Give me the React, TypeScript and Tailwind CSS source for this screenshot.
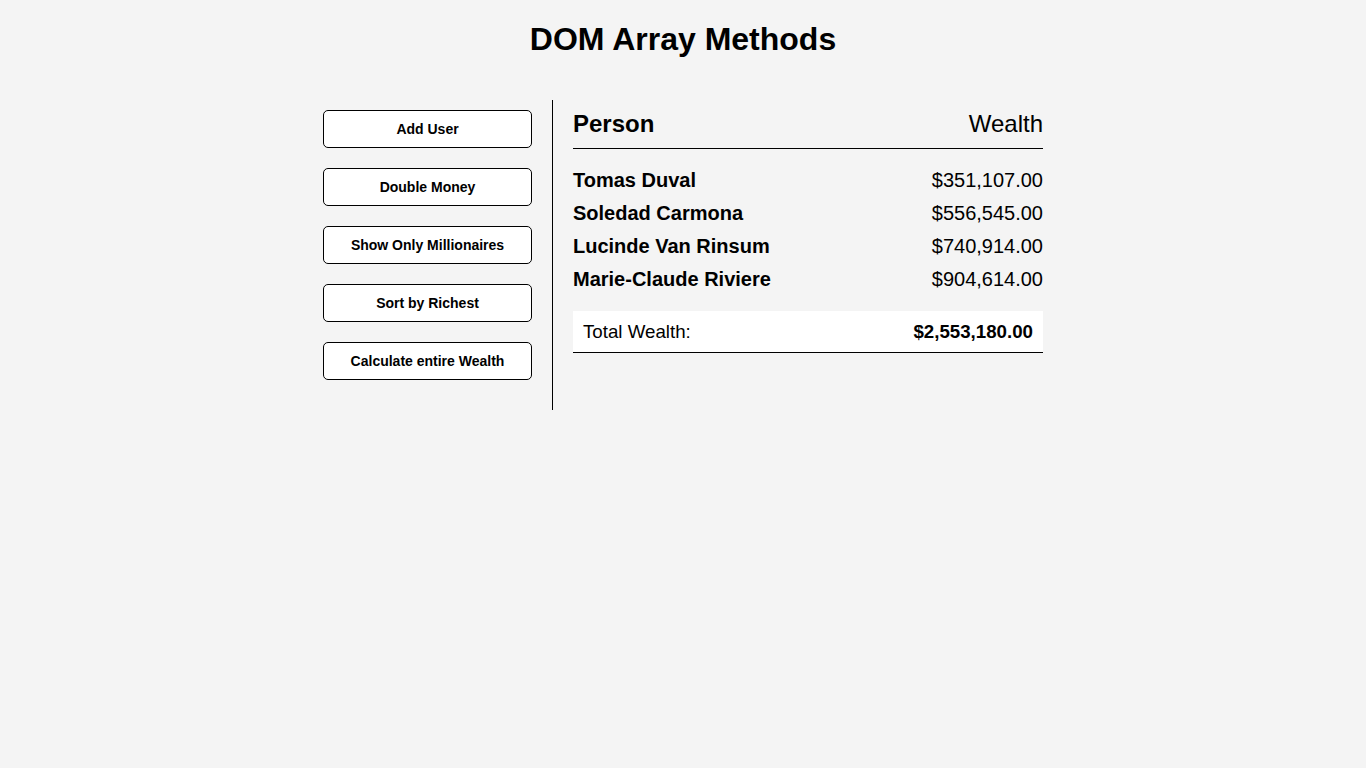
import React from "react";

const people = [
  { name: "Tomas Duval", wealth: "$351,107.00" },
  { name: "Soledad Carmona", wealth: "$556,545.00" },
  { name: "Lucinde Van Rinsum", wealth: "$740,914.00" },
  { name: "Marie-Claude Riviere", wealth: "$904,614.00" },
];

const buttons = [
  "Add User",
  "Double Money",
  "Show Only Millionaires",
  "Sort by Richest",
  "Calculate entire Wealth",
];

export default function App() {
  return (
    <div
      className="min-h-screen bg-[#f4f4f4] text-black"
      style={{ fontFamily: '"Liberation Sans", Arial, sans-serif' }}
    >
      <h1 className="pt-[21px] text-center text-[32px] font-bold leading-[37px]">
        DOM Array Methods
      </h1>
      <div className="mx-auto mt-[42px] flex w-[760px]">
        <aside className="box-border flex w-[250px] shrink-0 flex-col border-r border-black px-5 pt-[10px] pb-[10px]">
          {buttons.map((b) => (
            <button
              key={b}
              className="mb-5 box-border h-[38px] w-[209px] rounded-[5px] border border-black bg-white text-[14px] font-bold leading-none text-black"
            >
              {b}
            </button>
          ))}
        </aside>
        <main className="box-border w-[510px] px-5 pt-[10px]">
          <div className="flex h-[39px] items-start justify-between border-b border-black pb-[10px] text-[24px] leading-[28px]">
            <span className="font-bold">Person</span>
            <span>Wealth</span>
          </div>
          <div className="mt-[20px] flex flex-col gap-[10px]">
            {people.map((p) => (
              <div
                key={p.name}
                className="flex h-[23px] items-center justify-between text-[20px] leading-[23px]"
              >
                <strong className="font-bold">{p.name}</strong>
                <span>{p.wealth}</span>
              </div>
            ))}
          </div>
          <div className="mt-[20px] box-border flex h-[42px] items-center justify-between border-b border-black bg-white px-[10px] text-[18.72px] leading-[21px]">
            <span>Total Wealth:</span>
            <strong className="font-bold">$2,553,180.00</strong>
          </div>
        </main>
      </div>
    </div>
  );
}
